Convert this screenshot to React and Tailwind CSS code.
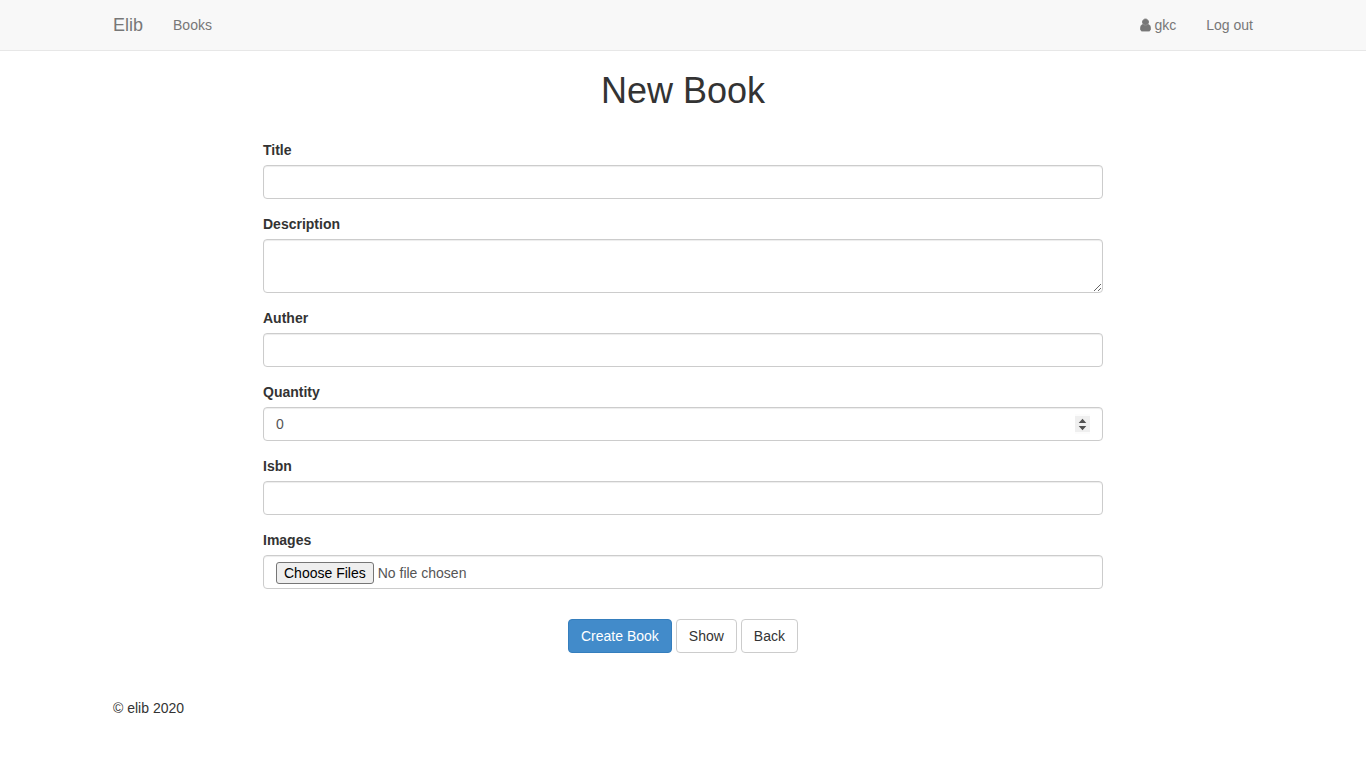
import React from "react";

const control =
  "block w-full rounded border border-[#cccccc] bg-white px-3 py-1.5 text-sm leading-5 text-[#555555] shadow-[inset_0_1px_1px_rgba(0,0,0,0.075)] outline-none focus:border-[#66afe9]";

const button =
  "inline-block cursor-pointer rounded border px-3 py-1.5 text-sm leading-5 whitespace-nowrap";

function UserIcon() {
  return (
    <svg
      className="h-3.5 w-[11px] shrink-0"
      viewBox="-64 0 1408 1792"
      fill="currentColor"
      stroke="currentColor"
      strokeWidth="110"
      aria-hidden="true"
    >
      <path d="M1280 1399q0 109-62.5 187t-150.5 78h-854q-88 0-150.5-78t-62.5-187q0-85 8.5-160.5t31.5-152 58.5-131 94-89 134.5-34.5q131 128 313 128t313-128q76 0 134.5 34.5t94 89 58.5 131 31.5 152 8.5 160.5zm-256-887q0 159-112.5 271.5t-271.5 112.5-271.5-112.5-112.5-271.5 112.5-271.5 271.5-112.5 271.5 112.5 112.5 271.5z" />
    </svg>
  );
}

/* Drawn over the native spin buttons, which still take the clicks. */
function SpinnerArrows() {
  return (
    <svg
      className="pointer-events-none absolute top-[9px] right-[13px] h-4 w-[15px] bg-[#efefef]"
      viewBox="0 0 15 16"
      fill="#505050"
      aria-hidden="true"
    >
      <path d="M7.5 2.8 11.3 7H3.7zM7.5 14.2 11.3 10H3.7z" />
    </svg>
  );
}

function Field({ id, label, children }) {
  return (
    <div className="mb-[15px]">
      <label htmlFor={id} className="mb-[5px] block w-fit font-bold">
        {label}
      </label>
      {children}
    </div>
  );
}

export default function App() {
  return (
    <div className="bg-white font-['Liberation_Sans',Arial,sans-serif] text-sm leading-5 text-[#333333]">
      <header className="border-b border-[#e7e7e7] bg-[#f8f8f8]">
        <nav className="mx-auto flex max-w-[1170px] items-center px-[15px] text-[#777777]">
          <a href="#home" className="py-[15px] pr-[15px] text-lg leading-5">
            Elib
          </a>
          <a href="#books" className="p-[15px]">
            Books
          </a>
          <a href="#profile" className="ml-auto flex items-center gap-[3px] p-[15px]">
            <UserIcon />
            gkc
          </a>
          <a href="#logout" className="py-[15px] pl-[15px]">
            Log out
          </a>
        </nav>
      </header>

      <main className="mx-auto max-w-[870px] px-[15px] pt-5">
        <h1 className="mb-[30px] text-center text-4xl leading-[39px]">New Book</h1>
        <form onSubmit={(e) => e.preventDefault()}>
          <Field id="title" label="Title">
            <input id="title" type="text" className={control} />
          </Field>
          <Field id="description" label="Description">
            <textarea id="description" rows={2} className={control} />
          </Field>
          <Field id="auther" label="Auther">
            <input id="auther" type="text" className={control} />
          </Field>
          <Field id="quantity" label="Quantity">
            <div className="relative">
              <input
                id="quantity"
                type="number"
                defaultValue={0}
                className={`${control} [&::-webkit-inner-spin-button]:opacity-100`}
              />
              <SpinnerArrows />
            </div>
          </Field>
          <Field id="isbn" label="Isbn">
            <input id="isbn" type="text" className={control} />
          </Field>
          <Field id="images" label="Images">
            <input
              id="images"
              type="file"
              multiple
              className={`${control} h-[34px] file:mr-1 file:rounded-[3px] file:border file:border-solid file:border-[#767676] file:bg-[#efefef] file:px-[7px] file:text-black`}
            />
          </Field>
          <div className="flex justify-center gap-1 pt-[15px]">
            <button
              type="submit"
              className={`${button} border-[#357ebd] bg-[#428bca] text-white`}
            >
              Create Book
            </button>
            <a href="#show" className={`${button} border-[#cccccc] bg-white`}>
              Show
            </a>
            <a href="#back" className={`${button} border-[#cccccc] bg-white`}>
              Back
            </a>
          </div>
        </form>
      </main>

      <footer className="mx-auto max-w-[1170px] px-[15px] pt-[45px] pb-5">
        <p>© elib 2020</p>
      </footer>
    </div>
  );
}
